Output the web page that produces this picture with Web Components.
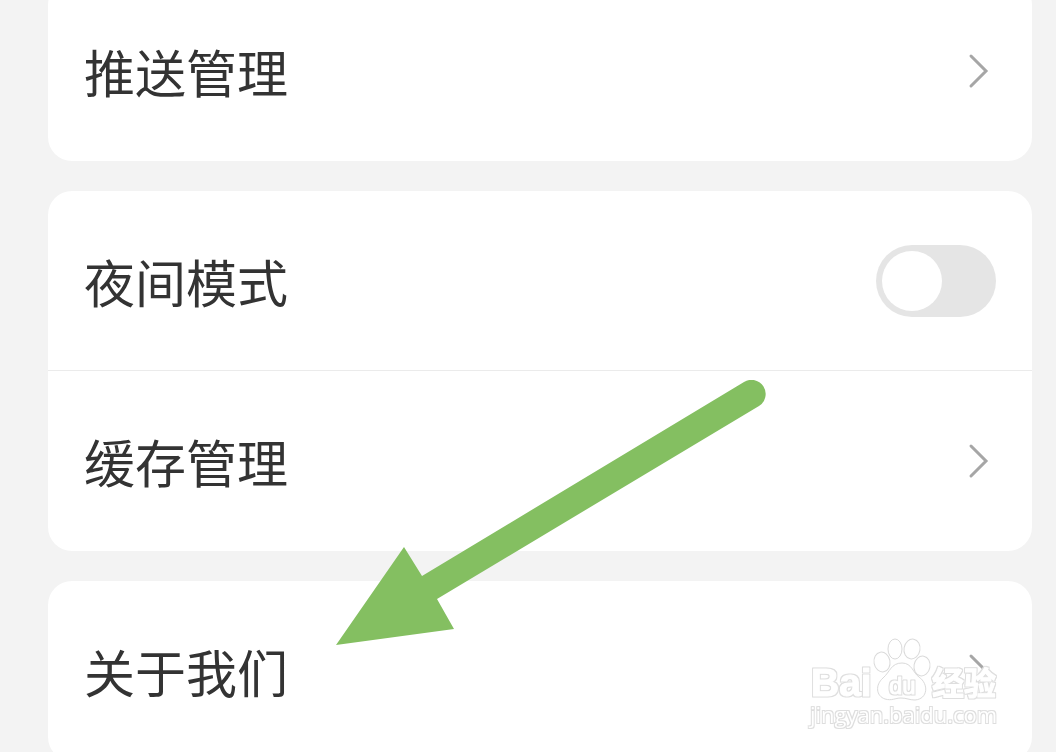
<!DOCTYPE html>
<html lang="zh-CN">
<head>
<meta charset="utf-8">
<meta name="viewport" content="width=device-width, initial-scale=1">
<title>设置</title>
<style>
html { background: #f3f3f3; overflow: hidden; }
body { margin: 0; font-family: "Noto Sans CJK SC", sans-serif; color: #333; }
</style>
</head>
<body>
<settings-page>
  <settings-group><settings-link>推送管理</settings-link></settings-group>
  <settings-group>
    <settings-switch>夜间模式</settings-switch>
    <settings-link>缓存管理</settings-link>
  </settings-group>
  <settings-group><settings-link>关于我们</settings-link></settings-group>
  <pointer-arrow slot="overlay"></pointer-arrow>
  <site-watermark slot="overlay"></site-watermark>
</settings-page>
<script>
const define = (name, html) => {
  const template = document.createElement('template');
  template.innerHTML = html;
  customElements.define(name, class extends HTMLElement {
    constructor() {
      super();
      this.attachShadow({ mode: 'open' }).append(template.content.cloneNode(true));
    }
  });
};

define('settings-page', `
<style>
:host { display: block; position: relative; height: 100vh; overflow: hidden; }
/* The list is scrolled a little past its first row. */
main { display: flex; flex-direction: column; gap: 30px; margin: -19px 24px 0 48px; }
</style>
<main><slot></slot></main>
<slot name="overlay"></slot>`);

define('settings-group', `
<style>
:host { display: block; background: #fff; border-radius: 24px; overflow: hidden; }
::slotted(:not(:first-child)) { border-top: 1px solid #ebebeb; margin-top: -1px; }
</style>
<slot></slot>`);

const rowStyle = `
:host { display: block; }
.row {
  display: flex; align-items: center; justify-content: space-between;
  box-sizing: border-box; width: 100%; height: 180px; padding: 0 36px;
  border: 0; background: none; color: inherit; text-decoration: none;
  font: inherit; font-size: 51px; line-height: 72px; cursor: pointer;
}`;

define('settings-link', `
<style>${rowStyle}
svg { width: 36px; height: 36px; fill: none; stroke: #a6a6a6; stroke-width: 3; stroke-linecap: round; }
</style>
<a class="row" href="#"><span><slot></slot></span>
<svg viewBox="0 0 36 36" aria-hidden="true"><path d="M11 3L26 18L11 33"/></svg></a>`);

define('settings-switch', `
<style>${rowStyle}
input {
  appearance: none; display: flex; box-sizing: border-box; width: 120px; height: 72px;
  margin: 0; padding: 6px; border-radius: 36px; background: #e5e5e5; cursor: pointer;
}
input::before { content: ""; width: 60px; height: 60px; border-radius: 50%; background: #fff; }
input:checked { justify-content: flex-end; background: #84bf61; }
</style>
<label class="row" for="toggle"><span><slot></slot></span><input id="toggle" type="checkbox" role="switch"></label>`);

define('pointer-arrow', `
<style>
:host { position: absolute; left: 336px; top: 380px; pointer-events: none; }
svg { display: block; width: 430px; height: 265px; }
</style>
<svg viewBox="0 0 430 265" fill="#84bf61" aria-hidden="true">
<path d="M0 265L68 167L86 196L408 2A13.5 13.5 0 0 1 423 26L101 219L118 249Z"/>
</svg>`);

define('site-watermark', `
<style>
:host { position: absolute; right: 52px; bottom: 16px; pointer-events: none; }
svg { display: block; width: 200px; height: 104px; overflow: visible; }
text { font-family: "Liberation Sans", sans-serif; font-weight: 700; stroke-linejoin: round; }
.outlined { filter: url(#outline); stroke: #fff; }
.cjk { font-family: "Noto Sans CJK SC", sans-serif; }
.url { font-family: "Open Sans", sans-serif; font-weight: 400; }
</style>
<svg viewBox="0 0 200 104" fill="#fff">
<defs>
<filter id="outline" x="-5%" y="-10%" width="110%" height="120%" color-interpolation-filters="sRGB">
<feMorphology in="SourceAlpha" operator="dilate" radius="1" result="edge"/>
<feFlood flood-color="#dedede"/>
<feComposite in2="edge" operator="in" result="line"/>
<feMerge><feMergeNode in="line"/><feMergeNode in="SourceGraphic"/></feMerge>
</filter>
</defs>
<g stroke="#dadada">
<ellipse cx="78" cy="30" rx="8" ry="10" transform="rotate(-10 78 30)"/>
<ellipse cx="91" cy="17" rx="7" ry="10"/>
<ellipse cx="108" cy="17" rx="8" ry="10" transform="rotate(10 108 17)"/>
<ellipse cx="118" cy="34" rx="8" ry="10" transform="rotate(10 118 34)"/>
<path d="M98 31C108 31 109 41 115 45C125 52 124 67 111 68C105 68 103 66 97 66C91 66 88 69 81 67C72 64 71 53 79 46C86 40 87 31 98 31Z"/>
</g>
<g class="outlined">
<text x="7" y="64" font-size="39">Bai</text>
<text x="85" y="62" font-size="24" style="font-weight:400">du</text>
<text class="cjk" x="128" y="63" font-size="32">经验</text>
<text class="url" x="6" y="91" font-size="22" stroke-width="0">jingyan.baidu.com</text>
</g>
</svg>`);
</script>
</body>
</html>
